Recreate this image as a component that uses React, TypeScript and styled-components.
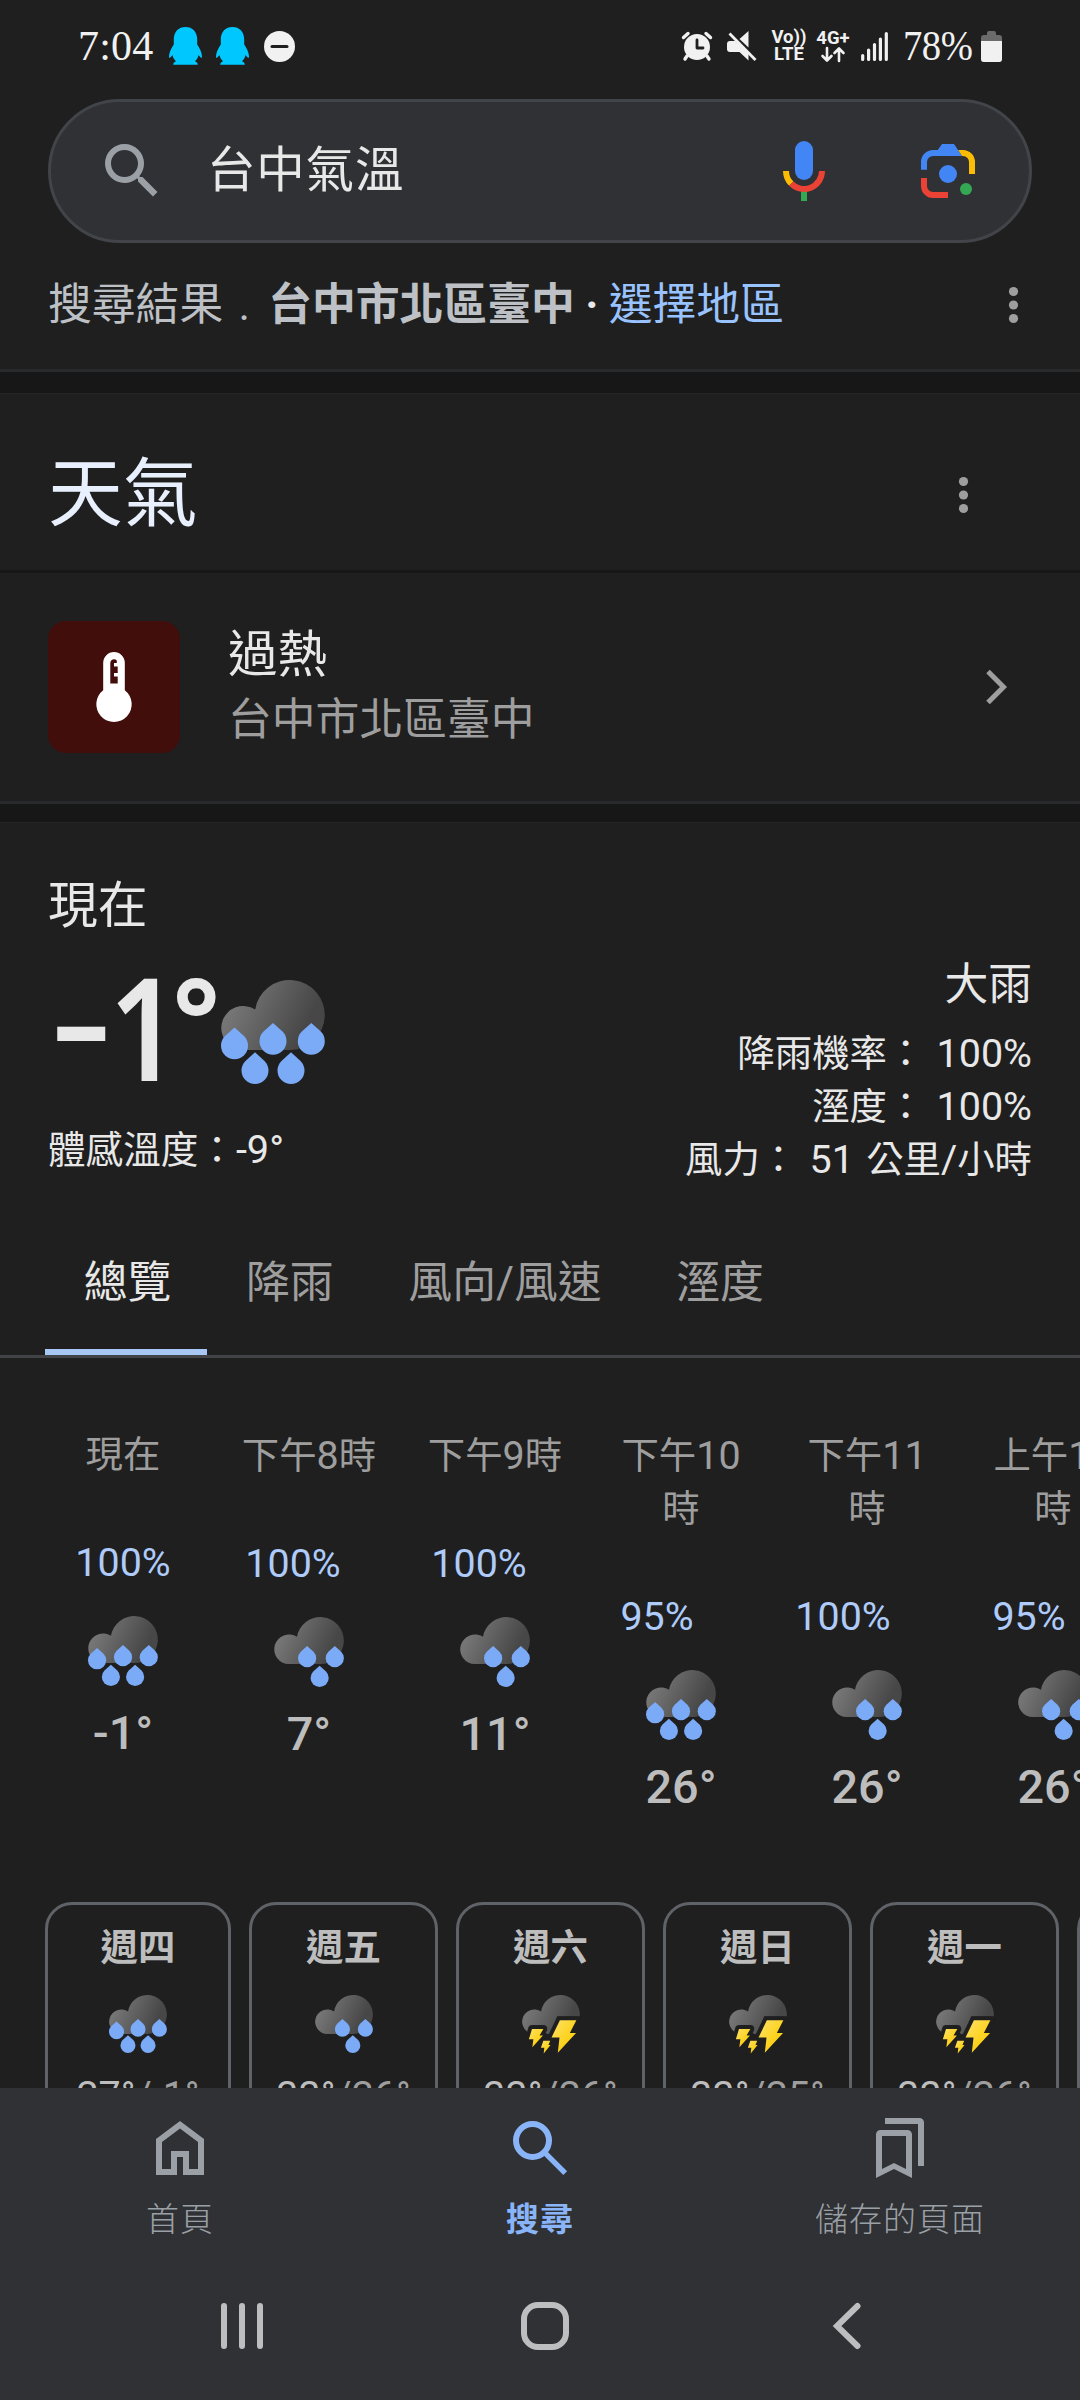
import React, { useId } from 'react';
import styled, { createGlobalStyle } from 'styled-components';

const c = {
  bg: '#1f1f1f',
  band: '#171717',
  bar: '#303134',
  text: '#e8e8e8',
  muted: '#9e9e9e',
  icon: '#9aa0a6',
  blue: '#8ab4f8',
  soft: '#aecbfa',
};

const Global = createGlobalStyle`
  * { box-sizing: border-box; }
  html, body { margin: 0; padding: 0; background: ${c.bg}; }
  body { font-family: Roboto, "Noto Sans CJK TC", sans-serif; color: ${c.text}; }
`;

const Screen = styled.div`
  width: 1080px;
  height: 2400px;
  overflow: hidden;
  display: flex;
  flex-direction: column;
  background: ${c.bg};
`;

/* Status bar */
const StatusBar = styled.div`
  height: 99px;
  flex: none;
  display: flex;
  align-items: flex-start;
  justify-content: space-between;
  padding: 23px 78px 0 78px;
`;
const StatusGroup = styled.div`
  display: flex;
  align-items: center;
  height: 46px;
`;
const StatusText = styled.span<{ $w: number; $ml?: number; $narrow?: boolean }>`
  font-family: "Liberation Serif", serif;
  font-size: 42px;
  line-height: 46px;
  width: ${p => p.$w}px;
  margin-left: ${p => p.$ml ?? 0}px;
  white-space: nowrap;
  color: #f1f1f1;
  letter-spacing: ${p => (p.$narrow ? -0.5 : 0.2)}px;
  transform: ${p => (p.$narrow ? 'scaleX(0.92)' : 'none')};
  transform-origin: left;
`;
const Glyph = styled.svg<{ $ml?: number }>`
  display: block;
  flex: none;
  overflow: visible;
  margin-left: ${p => p.$ml ?? 0}px;
`;
const NetBadge = styled.div<{ $ml: number; $w: number }>`
  display: flex;
  flex-direction: column;
  align-items: center;
  width: ${p => p.$w}px;
  margin-left: ${p => p.$ml}px;
  font-size: 18.5px;
  line-height: 17px;
  font-weight: 700;
  color: #f1f1f1;
  white-space: nowrap;
`;

/* Search field */
const SearchField = styled.div`
  height: 144px;
  flex: none;
  margin: 0 48px;
  padding: 0 45px;
  border: 3px solid #414448;
  border-radius: 72px;
  background: ${c.bar};
  display: flex;
  align-items: center;
`;
const Query = styled.div`
  flex: 1;
  margin-left: 39px;
  font-size: 48.5px;
  line-height: 60px;
  font-weight: 400;
  letter-spacing: 0.8px;
`;
const FieldIcons = styled.div`
  display: flex;
  gap: 72px;
`;

/* Results location row */
const LocationRow = styled.div`
  height: 129px;
  flex: none;
  display: flex;
  align-items: center;
  padding: 0 62px 3px 48px;
  border-bottom: 3px solid #292a2c;
  font-size: 43.8px;
  line-height: 60px;
  color: #bdc1c6;
  white-space: pre;
`;
const Place = styled.b`
  font-weight: 700;
  margin-left: 3px;
`;
const Period = styled.span`
  width: 42px;
  text-align: center;
`;
const Dot = styled.span`
  width: 34px;
  text-align: center;
  font-weight: 700;
  color: ${c.text};
`;
const RegionLink = styled.span`
  color: #99c3ff;
  flex: 1;
`;
const Band = styled.div<{ $h: number }>`
  height: ${p => p.$h}px;
  flex: none;
  background: ${c.band};
  border-bottom: 1px solid #242526;
`;

/* Weather title */
const TitleRow = styled.div`
  height: 179px;
  flex: none;
  display: flex;
  align-items: center;
  justify-content: space-between;
  padding: 25px 112px 0 48px;
  border-bottom: 3px solid ${c.band};
`;
const Title = styled.h1`
  margin: 0;
  font-size: 74.8px;
  line-height: 90px;
  font-weight: 400;
  color: #e8f0fe;
`;

/* Heat alert */
const AlertRow = styled.div`
  height: 231px;
  flex: none;
  display: flex;
  align-items: center;
  padding: 0 72px 0 48px;
  border-bottom: 3px solid #282a2d;
`;
const AlertTile = styled.div`
  width: 132px;
  height: 132px;
  border-radius: 18px;
  background: #410e0b;
  display: flex;
  align-items: center;
  justify-content: center;
`;
const AlertText = styled.div`
  flex: 1;
  margin-left: 48px;
  display: flex;
  flex-direction: column;
`;
const AlertTitle = styled.div`
  font-size: 49.5px;
  line-height: 66px;
`;
const AlertPlace = styled.div`
  font-size: 43.8px;
  line-height: 65px;
  color: ${c.muted};
`;

/* Latin digits and marks run a little larger than the ideographs beside them */
const Num = styled.span`
  font-size: 1.055em;
`;

/* Current weather */
const Current = styled.section`
  height: 406px;
  flex: none;
  display: flex;
  justify-content: space-between;
  padding: 49px 48px 0;
`;
const CurrentMain = styled.div`
  display: flex;
  flex-direction: column;
`;
const Now = styled.div`
  font-size: 49.8px;
  line-height: 68px;
`;
const TempRow = styled.div`
  display: flex;
  align-items: flex-start;
  height: 182px;
  padding-top: 40px;
`;
const BigTemp = styled.div`
  width: 173px;
  display: flex;
  align-items: flex-start;
  font-family: "Noto Sans", sans-serif;
  font-weight: 600;
  font-size: 143px;
  white-space: nowrap;
`;
const Minus = styled.span`
  width: 55.500px;
  margin-left: 5px;
  line-height: 73px;
  transform: scaleX(0.79);
  transform-origin: left;
`;
const Digit = styled.span`
  width: 64px;
  line-height: 91px;
  transform: scaleX(0.86);
  transform-origin: left;
`;
const Degree = styled.span`
  font-size: 112px;
  line-height: 72px;
  font-weight: 700;
`;
const Feels = styled.div`
  margin-top: 2px;
  font-size: 37.6px;
  line-height: 52px;
`;
const CurrentDetails = styled.div`
  padding-top: 81px;
  text-align: right;
  font-size: 37.4px;
  word-spacing: 2.5px;
  white-space: pre;
`;
const Detail = styled.div`
  height: 53px;
  line-height: 53px;
`;
const Condition = styled.div`
  font-size: 43.8px;
  line-height: 64px;
  height: 74px;
`;

/* Tabs */
const Tabs = styled.div`
  height: 129px;
  flex: none;
  display: flex;
  padding-left: 45px;
  border-bottom: 3px solid #424346;
`;
const Tab = styled.div<{ $active?: boolean }>`
  height: 126px;
  padding: 22px 35.9px 0 38.8px;
  font-size: 43.8px;
  line-height: 64px;
  color: ${p => (p.$active ? c.text : c.muted)};
  border-bottom: ${p => (p.$active ? '6px solid #a9c7f5' : 'none')};
`;

/* Hourly forecast */
const Hours = styled.div`
  height: 544px;
  width: 1146px;
  flex: none;
  display: flex;
  padding: 71px 0 0 30px;
`;
const Hour = styled.div`
  width: 186px;
  flex: none;
  display: flex;
  flex-direction: column;
  align-items: center;
`;
const HourLabel = styled.div`
  width: 140px;
  text-align: center;
  font-size: 37.4px;
  line-height: 53px;
  color: ${c.muted};
`;
const Chance = styled.div<{ $shift: number }>`
  margin-top: 54px;
  padding-right: ${p => p.$shift}px;
  font-size: 39.4px;
  line-height: 53px;
  color: ${c.soft};
`;
const HourIcon = styled.div`
  margin-top: 27px;
`;
const HourTemp = styled.div`
  margin-top: 17px;
  font-size: 46.8px;
  line-height: 60px;
  font-weight: 500;
  color: #bdbdbd;
`;

/* Daily forecast */
const Days = styled.div`
  height: 186px;
  flex: none;
  display: flex;
  gap: 18px;
  padding-left: 45px;
  overflow: hidden;
`;
const Day = styled.div<{ $first?: boolean }>`
  width: ${p => (p.$first ? 186 : 189)}px;
  height: 300px;
  flex: none;
  border: 3px solid #5f6368;
  border-radius: 27px;
  display: flex;
  flex-direction: column;
  align-items: center;
  padding-top: 17px;
`;
const DayName = styled.div`
  font-size: 37.4px;
  line-height: 52px;
  font-weight: 700;
  color: #bdbdbd;
  margin-bottom: 21px;
`;
const DayTemp = styled.div`
  margin-top: 17px;
  font-size: 39.4px;
  line-height: 52px;
  color: #bdbdbd;
  white-space: nowrap;
`;
const Low = styled.span`
  color: ${c.muted};
`;

/* Bottom bars */
const BottomBar = styled.nav`
  height: 174px;
  flex: none;
  display: grid;
  grid-template-columns: repeat(3, 360px);
  background: ${c.bar};
`;
const BottomItem = styled.div<{ $active?: boolean }>`
  display: flex;
  flex-direction: column;
  align-items: center;
  padding-top: 24px;
  font-size: 33px;
  line-height: 44px;
  letter-spacing: 1px;
  font-weight: ${p => (p.$active ? 700 : 300)};
  color: ${p => (p.$active ? c.blue : c.icon)};
`;
const BottomLabel = styled.span`
  margin-top: 14px;
`;
const SystemBar = styled.div`
  height: 138px;
  flex: none;
  display: grid;
  grid-template-columns: repeat(3, 302.5px);
  justify-items: center;
  padding: 40px 0 0 91px;
  background: ${c.bar};
`;

const BOLTS = [
  '67.9,45.4 97.5,45.4 85.8,68.2 96.9,68.2 64.2,103.4 67.3,76 53,76',
  '17.9,61 38.3,61 31.5,72.4 37.6,72.4 18.5,93.9 20.4,79.5 12.3,79.5',
  '38.3,82 50.6,82 47.5,89.7 51.2,89.7 38.9,105 40,94.5 33.9,94.5',
];
const DROPS: Record<string, number[][]> = {
  heavy: [[13.5, 47.5], [52, 43], [90.3, 43], [34, 72.3], [70, 72.3]],
  rain: [[49.2, 43], [90.3, 43], [67.8, 72.3]],
  storm: [],
};

type Sky = 'heavy' | 'rain' | 'storm';

function WeatherIcon({ kind, size }: { kind: Sky; size: number }) {
  const id = useId();
  return (
    <Glyph width={size} height={size} viewBox="0 0 104 104">
      <defs>
        <linearGradient id={id + 'c'} gradientUnits="userSpaceOnUse" x1="14" y1="25" x2="84" y2="58">
          <stop offset="0" stopColor="#757575" />
          <stop offset="0.95" stopColor="#474747" />
        </linearGradient>
        <linearGradient id={id + 'b'} x1="0" y1="0" x2="1" y2="1">
          <stop offset="0" stopColor="#fde26a" />
          <stop offset="0.6" stopColor="#fdd21c" />
        </linearGradient>
      </defs>
      <path fill={`url(#${id}c)`} d="M22 70a22 22 0 1 1 12.2-40.5A35 35 0 1 1 69 70z" />
      {DROPS[kind].map(([x, y]) => (
        <path key={x} fill="#7baaf7" transform={`translate(${x} ${y})`} d="M0 0 9.5 8.6A13.5 13.5 0 1 1-9.5 8.6z" />
      ))}
      {kind === 'storm' && (
        <g>
          <path fill={c.bg} d="M63 38h43v36H52z" />
          {BOLTS.map(p => (
            <polygon key={p} points={p} fill={c.bg} stroke={c.bg} strokeWidth="14" strokeLinejoin="round" />
          ))}
          {BOLTS.map(p => (
            <polygon key={p} points={p} fill={`url(#${id}b)`} />
          ))}
        </g>
      )}
    </Glyph>
  );
}

const Mixed = ({ text }: { text: string }) => (
  <>
    {text.split(/([\x20-\x7e°]+)/).map((part, i) => (i % 2 ? <Num key={i}>{part}</Num> : part))}
  </>
);

const Kebab = () => (
  <Glyph width="9" height="36" viewBox="0 0 9 36" fill={c.muted}>
    <circle cx="4.5" cy="4.5" r="4.6" />
    <circle cx="4.5" cy="18" r="4.6" />
    <circle cx="4.5" cy="31.5" r="4.6" />
  </Glyph>
);

const Penguin = ({ ml }: { ml: number }) => (
  <Glyph $ml={ml} width="33" height="38" viewBox="0 0 33 38" fill="#00c8ff">
    <path d="M16.5 0C9.500 0 4.800 4.800 4.800 12.500V17.500C2.500 21 0 25.500 0 29.500C0 31.800 1.200 31 3.500 28C4 30.500 5 32.500 7 34.200C5 35 4.200 36 4.200 37.800H28.800C28.800 36 28 35 26 34.200C28 32.500 29 30.500 29.500 28C31.800 31 33 31.800 33 29.500C33 25.500 30.500 21 28.200 17.500V12.500C28.200 4.800 23.500 0 16.500 0z" />
  </Glyph>
);

const hours: { label: string; chance: string; sky: Sky; temp: string; shift: number }[] = [
  { label: '現在', chance: '100%', sky: 'heavy', temp: '-1°', shift: 0 },
  { label: '下午8時', chance: '100%', sky: 'rain', temp: '7°', shift: 32 },
  { label: '下午9時', chance: '100%', sky: 'rain', temp: '11°', shift: 32 },
  { label: '下午10時', chance: '95%', sky: 'heavy', temp: '26°', shift: 48 },
  { label: '下午11時', chance: '100%', sky: 'rain', temp: '26°', shift: 48 },
  { label: '上午12時', chance: '95%', sky: 'rain', temp: '26°', shift: 48 },
];

const days: { name: string; sky: Sky; high: string; low: string }[] = [
  { name: '週四', sky: 'heavy', high: '27°', low: '-1°' },
  { name: '週五', sky: 'rain', high: '33°', low: '26°' },
  { name: '週六', sky: 'storm', high: '33°', low: '26°' },
  { name: '週日', sky: 'storm', high: '33°', low: '25°' },
  { name: '週一', sky: 'storm', high: '33°', low: '26°' },
  { name: '週二', sky: 'storm', high: '33°', low: '26°' },
];

export default function App() {
  return (
    <Screen>
      <Global />
      <StatusBar>
        <StatusGroup>
          <StatusText $w={78}>7:04</StatusText>
          <Penguin ml={13} />
          <Penguin ml={14} />
          <Glyph $ml={15} width="31" height="31" viewBox="0 0 31 31">
            <circle cx="15.500" cy="15.500" r="15.500" fill="#f1f1f1" />
            <rect x="6.500" y="14" width="18" height="3" rx="1.500" fill={c.bg} />
          </Glyph>
        </StatusGroup>
        <StatusGroup>
          <Glyph width="30" height="30" viewBox="0 0 30 30">
            <circle cx="15" cy="16" r="13" fill="#f1f1f1" />
            <path d="M1.500 6.500 6 2.500M28.500 6.500 24 2.500M5 25l-2 3M25 25l2 3" stroke="#f1f1f1" strokeWidth="3.400" strokeLinecap="round" />
            <path d="M15 9v8h6" stroke={c.bg} strokeWidth="2.800" fill="none" strokeLinecap="round" strokeLinejoin="round" />
          </Glyph>
          <Glyph $ml={15} width="30" height="30" viewBox="0 0 30 30" fill="#f1f1f1">
            <path d="M3 10h5.500L21.500 22v7.500L12.500 21H3a3 3 0 0 1-3-3v-5a3 3 0 0 1 3-3zM12.500 8 21.500 0v16.500z" />
            <path d="M2.500 2.500 28.500 29" stroke="#f1f1f1" strokeWidth="2.800" />
          </Glyph>
          <NetBadge $ml={16} $w={32}>
            <span>Vo))</span>
            <span>LTE</span>
          </NetBadge>
          <NetBadge $ml={11} $w={34}>
            <span>4G+</span>
            <Glyph width="24" height="15" viewBox="0 0 24 15" fill="none" stroke="#f1f1f1" strokeWidth="2.600" strokeLinecap="round" strokeLinejoin="round">
              <path d="M6 1v12M1.500 9 6 13.500 10.500 9M18 14V2M13.500 6 18 1.500 22.500 6" />
            </Glyph>
          </NetBadge>
          <Glyph $ml={11} width="27" height="29" viewBox="0 0 27 29" stroke="#f1f1f1" strokeWidth="3.200" strokeLinecap="round">
            <path d="M1.700 23.500v4M7.600 18v9.500M13.500 12.500v15M19.400 7v20.500M25.300 1.500v26" />
          </Glyph>
          <StatusText $narrow $w={78} $ml={15}>78%</StatusText>
          <Glyph width="21" height="31" viewBox="0 0 21 31">
            <path d="M6 2a2 2 0 0 1 2-2h5a2 2 0 0 1 2 2v2h3a3 3 0 0 1 3 3v21a3 3 0 0 1-3 3H3a3 3 0 0 1-3-3V7a3 3 0 0 1 3-3h3z" fill="#6b6b6b" />
            <path d="M0 10h21v18a3 3 0 0 1-3 3H3a3 3 0 0 1-3-3z" fill="#f1f1f1" />
          </Glyph>
        </StatusGroup>
      </StatusBar>

      <SearchField>
        <Glyph width="72" height="72" viewBox="0 0 24 24" fill={c.icon}>
          <path d="M15.500 14h-.790l-.280-.270A6.471 6.471 0 0 0 16 9.500 6.500 6.500 0 1 0 9.500 16c1.610 0 3.090-.590 4.230-1.570l.270.280v.790l5 4.990L20.490 19l-4.990-5zm-6 0C7.010 14 5 11.990 5 9.500S7.010 5 9.500 5 14 7.010 14 9.500 11.990 14 9.500 14z" />
        </Glyph>
        <Query>台中氣溫</Query>
        <FieldIcons>
          <Glyph width="72" height="72" viewBox="0 0 24 24">
            <rect x="9" y="2" width="6" height="13" rx="3" fill="#4285f4" />
            <path d="M11 18.500h2V22h-2z" fill="#34a853" />
            <path d="M5 12h2a5 5 0 0 0 1.460 3.540L7.050 16.950A7 7 0 0 1 5 12z" fill="#fbbc04" />
            <path d="M17 12h2a7 7 0 0 1-11.950 4.950l1.410-1.410A5 5 0 0 0 17 12z" fill="#ea4335" />
          </Glyph>
          <Glyph width="72" height="72" viewBox="0 0 24 24">
            <path d="M3 11.600V9a4 4 0 0 1 4-4h1.600L10 3h4l2.700 4H7a2 2 0 0 0-2 2v2.600z" fill="#4285f4" />
            <path d="M15.400 5H17a4 4 0 0 1 4 4v4h-2V9a2 2 0 0 0-2-2h-.300z" fill="#fbbc04" />
            <path d="M3 14.300h2V17a2 2 0 0 0 2 2h5v2H7a4 4 0 0 1-4-4z" fill="#ea4335" />
            <circle cx="12" cy="13" r="3" fill="#4285f4" />
            <circle cx="18" cy="18" r="2" fill="#34a853" />
          </Glyph>
        </FieldIcons>
      </SearchField>

      <LocationRow>
        <span>搜尋結果</span>
        <Period>.</Period>
        <Place>台中市北區臺中</Place>
        <Dot>·</Dot>
        <RegionLink>選擇地區</RegionLink>
        <Kebab />
      </LocationRow>
      <Band $h={22} />

      <TitleRow>
        <Title>天氣</Title>
        <Kebab />
      </TitleRow>

      <AlertRow>
        <AlertTile>
          <Glyph width="36" height="70" viewBox="0 0 36 70">
            <path fill="#fff" d="M7.200 10.800a10.800 10.800 0 0 1 21.600 0v27.500a17.700 17.700 0 1 1-21.600 0z" />
            <path fill="#410e0b" d="M14.300 31.500V11a3.700 3.700 0 0 1 6.500-2.500V11H18v3.500h3.700v6.500H18v3.500h3.700v7z" />
          </Glyph>
        </AlertTile>
        <AlertText>
          <AlertTitle>過熱</AlertTitle>
          <AlertPlace>台中市北區臺中</AlertPlace>
        </AlertText>
        <Glyph width="23" height="36" viewBox="0 0 23 36" fill="none" stroke={c.muted} strokeWidth="5">
          <path d="M3 2.500 18.500 18 3 33.500" />
        </Glyph>
      </AlertRow>
      <Band $h={19} />

      <Current>
        <CurrentMain>
          <Now>現在</Now>
          <TempRow>
            <BigTemp>
              <Minus>–</Minus>
              <Digit>1</Digit>
              <Degree>°</Degree>
            </BigTemp>
            <WeatherIcon kind="heavy" size={104} />
          </TempRow>
          <Feels>
            <Mixed text="體感溫度：-9°" />
          </Feels>
        </CurrentMain>
        <CurrentDetails>
          <Condition>大雨</Condition>
          {['降雨機率： 100%', '溼度： 100%', '風力： 51 公里/小時'].map(line => (
            <Detail key={line}>
              <Mixed text={line} />
            </Detail>
          ))}
        </CurrentDetails>
      </Current>

      <Tabs>
        <Tab $active>總覽</Tab>
        <Tab>降雨</Tab>
        <Tab>風向/風速</Tab>
        <Tab>溼度</Tab>
      </Tabs>

      <Hours>
        {hours.map(h => (
          <Hour key={h.label}>
            <HourLabel>
              <Mixed text={h.label} />
            </HourLabel>
            <Chance $shift={h.shift}>{h.chance}</Chance>
            <HourIcon>
              <WeatherIcon kind={h.sky} size={70} />
            </HourIcon>
            <HourTemp>{h.temp}</HourTemp>
          </Hour>
        ))}
      </Hours>

      <Days>
        {days.map((d, i) => (
          <Day key={d.name} $first={i === 0}>
            <DayName>{d.name}</DayName>
            <WeatherIcon kind={d.sky} size={58} />
            <DayTemp>
              {d.high}
              <Low>/{d.low}</Low>
            </DayTemp>
          </Day>
        ))}
      </Days>

      <BottomBar>
        <BottomItem>
          <Glyph width="72" height="72" viewBox="0 0 24 24" fill="currentColor" fillRule="evenodd">
            <path d="M12 3 4 9v12h7v-6h2v6h7V9zM18 19h-3v-6H9v6H6v-9l6-4.500 6 4.500z" />
          </Glyph>
          <BottomLabel>首頁</BottomLabel>
        </BottomItem>
        <BottomItem $active>
          <Glyph width="72" height="72" viewBox="0 0 24 24" fill="none" stroke="currentColor" strokeWidth="2">
            <circle cx="9.500" cy="9.500" r="5.500" />
            <path d="M13.400 13.400 20.400 20.400" strokeWidth="1.800" />
          </Glyph>
          <BottomLabel>搜尋</BottomLabel>
        </BottomItem>
        <BottomItem>
          <Glyph width="72" height="72" viewBox="0 0 24 24" fill="currentColor" fillRule="evenodd">
            <path d="M14.500 6h-9A1.500 1.500 0 0 0 4 7.500V22l6-3 6 3V7.500A1.500 1.500 0 0 0 14.500 6zM14 19l-4-2-4 2V8h8z" />
            <path d="M7 2h11.500A1.500 1.500 0 0 1 20 3.500V18h-2V4H7z" />
          </Glyph>
          <BottomLabel>儲存的頁面</BottomLabel>
        </BottomItem>
      </BottomBar>

      <SystemBar>
        <Glyph width="48" height="48" viewBox="0 0 48 48" stroke="#bdbebf" strokeWidth="6" strokeLinecap="round">
          <path d="M6 4v40M24 4v40M42 4v40" />
        </Glyph>
        <Glyph width="48" height="48" viewBox="0 0 48 48" fill="none" stroke="#bdbebf" strokeWidth="6">
          <rect x="3" y="3" width="42" height="42" rx="14" />
        </Glyph>
        <Glyph width="48" height="48" viewBox="0 0 48 48" fill="none" stroke="#bdbebf" strokeWidth="6" strokeLinecap="round">
          <path d="M34.500 4 14 24 34.500 44" />
        </Glyph>
      </SystemBar>
    </Screen>
  );
}
